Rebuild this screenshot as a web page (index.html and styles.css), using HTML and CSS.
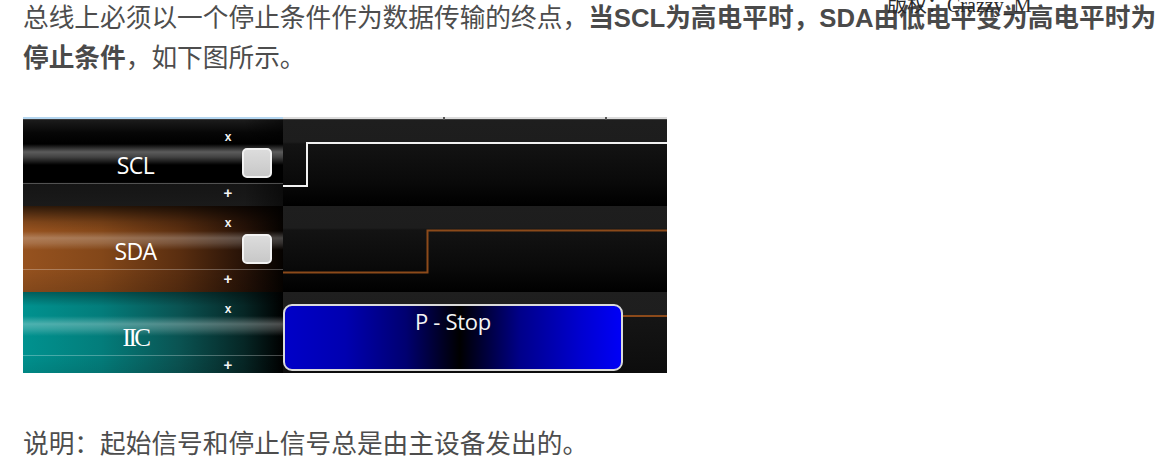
FILE: index.html
```html
<!DOCTYPE html>
<html lang="zh-CN">
<head>
<meta charset="utf-8">
<title>IIC 停止条件</title>
<link rel="stylesheet" href="styles.css">
</head>
<body>
<div class="article">
  <span class="watermark">版权：Crazzy_M</span>
  <p class="para first">总线上必须以一个停止条件作为数据传输的终点，<strong>当SCL为高电平时，SDA由低电平变为高电平时为停止条件</strong>，如下图所示。</p>

  <div class="figure">
    <div class="topstrip">
      <div class="ts-left"></div>
      <div class="ts-right"><span class="tick t1"></span><span class="tick t2"></span></div>
    </div>

    <div class="row">
      <div class="label scl">
        <span class="mk mk-x">x</span>
        <span class="name">SCL</span>
        <span class="btn"></span>
        <span class="sep"></span>
        <span class="mk mk-p">+</span>
      </div>
      <div class="plot">
        <svg class="wave" width="384" height="86" viewBox="0 0 384 86">
          <path d="M0 66 H24 V23 H384" fill="none" stroke="#f2f2f2" stroke-width="2"/>
        </svg>
      </div>
    </div>

    <div class="row">
      <div class="label sda">
        <span class="mk mk-x">x</span>
        <span class="name">SDA</span>
        <span class="btn"></span>
        <span class="sep"></span>
        <span class="mk mk-p">+</span>
      </div>
      <div class="plot">
        <svg class="wave" width="384" height="86" viewBox="0 0 384 86">
          <path d="M0 66.5 H144.5 V24.5 H384" fill="none" stroke="#8c4a1a" stroke-width="2"/>
        </svg>
      </div>
    </div>

    <div class="row">
      <div class="label iic">
        <span class="mk mk-x">x</span>
        <span class="name serif">IIC</span>
        <span class="sep"></span>
        <span class="mk mk-p">+</span>
      </div>
      <div class="plot iic-plot">
        <div class="frame">P - Stop</div>
        <div class="tail"></div>
      </div>
    </div>
  </div>

  <p class="para note">说明：起始信号和停止信号总是由主设备发出的。</p>
</div>
</body>
</html>
```

FILE: styles.css
```css
html, body {
  margin: 0;
  padding: 0;
  background: #ffffff;
}

.article {
  position: relative;
  padding: 0 0 0 23px;
  font-family: "Liberation Sans", "Noto Sans CJK SC", sans-serif;
  color: #4d4d4d;
  font-size: 25.7px;
}

.para {
  margin: 0;
  line-height: 40px;
  width: 1153px;
}

.para.first {
  margin-top: -2px;
}

.para strong {
  font-weight: 700;
  color: #4a4a4a;
}

.para.note {
  margin-top: 51px;
}

.watermark {
  position: absolute;
  left: 887px;
  top: -3px;
  font-family: "Liberation Serif", "Noto Sans CJK SC", serif;
  font-size: 20px;
  line-height: 20px;
  font-weight: 400;
  color: #2a2a2a;
  white-space: nowrap;
  z-index: 2;
}

/* ---------- figure ---------- */
.figure {
  margin-top: 39px;
  width: 644px;
  height: 256px;
  overflow: hidden;
  background: #000;
}

.topstrip {
  display: grid;
  grid-template-columns: 260px 384px;
  height: 3px;
}

.ts-left {
  background: linear-gradient(to bottom, #b4d6f0 0 2px, #3a3a3a 2px 3px);
}

.ts-right {
  position: relative;
  background: linear-gradient(to bottom, #dcdcdc 0 2px, #404040 2px 3px);
}

.tick {
  position: absolute;
  top: 0;
  width: 2px;
  height: 3px;
  background: #555;
}
.t1 { left: 160px; }
.t2 { left: 322px; }

.row {
  display: grid;
  grid-template-columns: 260px 384px;
  height: 86px;
}

/* ---------- label panel ---------- */
.label {
  display: grid;
  grid-template-columns: 199px 12px 8px 30px 11px;
  grid-template-rows: 11px 12px 5px 30px 5px 1px 18px 4px;
  color: #fff;
}

.label.scl {
  background:
    linear-gradient(to bottom, transparent 24px, rgba(255,255,255,0.36) 32px, rgba(255,255,255,0.26) 37px, transparent 45px),
    linear-gradient(to right, rgba(0,0,0,0) 0, rgba(0,0,0,0) 85%, rgba(0,0,0,0.5) 100%),
    linear-gradient(to bottom, #1b1b1b 0, #060606 13px, #000 24px, #000 62px, #151515 64px, #1a1a1a 86px);
}

.label.sda {
  background:
    linear-gradient(to bottom, transparent 25px, rgba(255,255,255,0.26) 32px, rgba(255,255,255,0.18) 37px, transparent 44px),
    linear-gradient(to bottom, rgba(0,0,0,0.7) 0, rgba(0,0,0,0.15) 16px, rgba(0,0,0,0) 24px, rgba(0,0,0,0) 62px, rgba(0,0,0,0.12) 86px),
    linear-gradient(to right, #96521f 0%, #834719 30%, #5a2e10 60%, #261207 85%, #050200 100%);
}

.label.iic {
  background:
    linear-gradient(to bottom, transparent 24px, rgba(255,255,255,0.30) 32px, rgba(255,255,255,0.20) 37px, transparent 44px),
    linear-gradient(to bottom, rgba(0,0,0,0.35) 0, rgba(0,0,0,0) 14px, rgba(0,0,0,0) 62px, rgba(0,0,0,0.1) 86px),
    linear-gradient(to right, #00928f 0%, #037d7b 30%, #0a5352 60%, #062625 85%, #000 100%);
}

.mk {
  font-family: "Liberation Sans", Arial, sans-serif;
  font-weight: 700;
  text-align: center;
  color: #f4f4f4;
}

.mk-x {
  grid-row: 2;
  grid-column: 2;
  font-size: 12px;
  line-height: 12px;
}

.mk-p {
  grid-row: 7;
  grid-column: 2;
  font-size: 15px;
  line-height: 18px;
}

.name {
  grid-row: 4 / 6;
  grid-column: 1 / 4;
  padding-left: 6px;
  text-align: center;
  font-family: "Open Sans", "Noto Sans", sans-serif;
  font-size: 23px;
  line-height: 35px;
  letter-spacing: -0.6px;
  color: #fff;
}

.name.serif {
  font-family: "Liberation Serif", "DejaVu Serif", serif;
  font-size: 25px;
  letter-spacing: -2.5px;
  line-height: 35px;
}

.btn {
  grid-row: 4;
  grid-column: 4;
  box-sizing: border-box;
  border: 2px solid #f2f2f2;
  border-radius: 5px;
  background: linear-gradient(to bottom, #dcdcdc, #c8c8c8);
  box-shadow: 0 0 1px rgba(0,0,0,0.8);
}

.sep {
  grid-row: 6;
  grid-column: 1 / -1;
  background: rgba(255,255,255,0.28);
}

/* ---------- plot panel ---------- */
.plot {
  background: linear-gradient(to bottom, #1e1e1e 0, #1d1d1d 22px, #131313 24px, #0a0a0a 60px, #000 86px);
}

.wave {
  display: block;
}

.iic-plot {
  display: flex;
  align-items: flex-start;
  background: linear-gradient(to bottom, #1f1f1f 0, #1e1e1e 23px, #151515 25px, #0c0c0c 86px);
}

.frame {
  box-sizing: border-box;
  width: 340px;
  height: 67px;
  margin-top: 12px;
  border: 2px solid #dadada;
  border-radius: 9px;
  background: linear-gradient(to right, #0000c8 0%, #0000b0 18%, #000070 36%, #000000 52%, #00008a 70%, #0000d0 88%, #0000f6 100%);
  color: #f4f4f4;
  font-family: "Open Sans", "Noto Sans", sans-serif;
  font-size: 22px;
  line-height: 26px;
  padding-top: 2px;
  text-align: center;
  letter-spacing: -0.3px;
}

.tail {
  flex: 1;
  margin-top: 23px;
  height: 2px;
  background: #8c4a1a;
}
```
